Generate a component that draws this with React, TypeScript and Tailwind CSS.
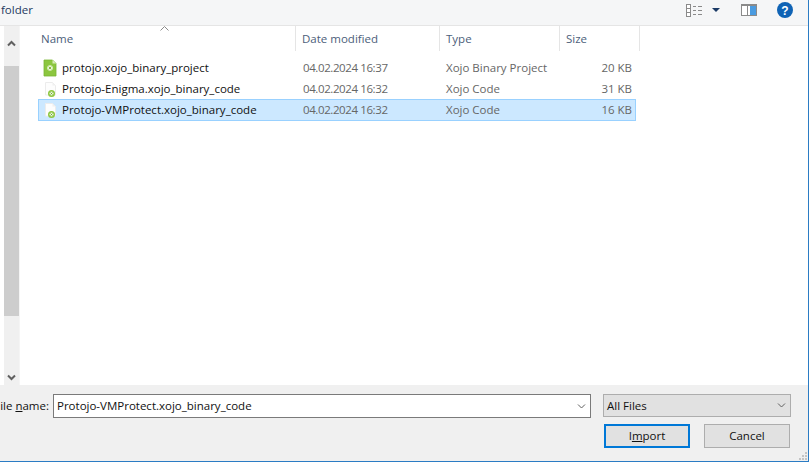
import React from "react";

const font = { fontFamily: '"Open Sans", "Noto Sans", sans-serif' };

function ProjectIcon() {
  return (
    <svg width="16" height="18" viewBox="0 0 16 18" className="shrink-0">
      <path d="M1 1h8.500l3.500 3.500V17H1z" fill="#8cc63f" stroke="#7ab534" strokeWidth="0.800" />
      <path d="M9.500 1v3.500H13z" fill="#d8ecb8" />
      <circle cx="7" cy="9" r="2.800" fill="#e8f5d5" />
      <path d="M5.700 7.700l2.600 2.600M8.300 7.700l-2.600 2.600" stroke="#78b030" strokeWidth="0.900" />
    </svg>
  );
}

function CodeIcon() {
  return (
    <svg width="16" height="18" viewBox="0 0 16 18" className="shrink-0">
      <path d="M2.500 2.500h7l3 3V15h-10z" fill="#fdfdfd" stroke="#ececec" strokeWidth="1" />
      <path d="M9.500 2.500v3h3z" fill="#f0f0f0" />
      <circle cx="8.500" cy="13.500" r="3.500" fill="#8cc63f" />
      <circle cx="8.500" cy="13.500" r="2" fill="#eaf5da" />
      <path d="M7.500 12.500l2 2M9.500 12.500l-2 2" stroke="#6ca52c" strokeWidth="0.900" />
    </svg>
  );
}

function Chevron({ up = false, color = "#606060", w = 2 }: { up?: boolean; color?: string; w?: number }) {
  return (
    <svg width="9" height="7" viewBox="0 0 9 7">
      <path d={up ? "M1 5.500l3.500-3.500 3.500 3.500" : "M1 1.500l3.500 3.500 3.500-3.500"} fill="none" stroke={color} strokeWidth={w} />
    </svg>
  );
}

const rows = [
  { n: "protojo.xojo_binary_project", d: "04.02.2024 16:37", t: "Xojo Binary Project", s: "20 KB", project: true },
  { n: "Protojo-Enigma.xojo_binary_code", d: "04.02.2024 16:32", t: "Xojo Code", s: "31 KB" },
  { n: "Protojo-VMProtect.xojo_binary_code", d: "04.02.2024 16:32", t: "Xojo Code", s: "16 KB", sel: true },
];

export default function App() {
  return (
    <div className="w-[809px] h-[462px] flex flex-col overflow-hidden bg-[#f0f0f0] text-[11.5px] border-r border-b border-[#2b7cc4]" style={font}>
      <div className="h-[26px] shrink-0 flex items-center bg-[#f5f6f7] border-b border-[#e5e5e5]">
        <span className="pl-[1px] -mt-[6px] text-[#1e3a5f]">folder</span>
        <div className="ml-auto flex items-center -mt-[5px]">
          <svg width="17" height="13" viewBox="0 0 17 13">
            <rect x="0.500" y="0.500" width="4" height="12" fill="#fff" stroke="#8a8a8a" />
            <path d="M0 4.500h5M0 8.500h5" stroke="#8a8a8a" />
            <path d="M7 2.500h3M12 2.500h4M7 6.500h3M12 6.500h4M7 10.500h3M12 10.500h4" stroke="#8a8a8a" />
          </svg>
          <svg width="8" height="4" viewBox="0 0 8 4" className="ml-[9px]">
            <path d="M0 0h8L4 4z" fill="#1b3a66" />
          </svg>
          <svg width="16" height="12" viewBox="0 0 16 12" className="ml-[21px]">
            <rect x="0.500" y="0.500" width="15" height="11" fill="#fff" stroke="#8a8a8a" />
            <rect x="9" y="2" width="6" height="9" fill="#4a9be0" />
            <rect x="1" y="1" width="14" height="1" fill="#8a8a8a" />
            <rect x="6" y="1" width="1" height="10" fill="#8a8a8a" />
          </svg>
          <svg width="16" height="16" viewBox="0 0 16 16" className="ml-[20px] mr-[15px]">
            <circle cx="8" cy="8" r="8" fill="#0f63b5" />
            <text x="8" y="12.500" textAnchor="middle" fontSize="12" fontWeight="700" fill="#fff" fontFamily="Liberation Sans">?</text>
          </svg>
        </div>
      </div>

      <div className="flex-1 min-h-0 flex bg-white">
        <div className="w-[4px] shrink-0" />
        <div className="w-[15px] shrink-0 flex flex-col bg-[#f0f0f0]">
          <div className="h-[40px] shrink-0 pt-[14px] flex justify-center"><Chevron up /></div>
          <div className="h-[250px] shrink-0 bg-[#cdcdcd]" />
          <div className="flex-1 flex items-end justify-center pb-[4px]"><Chevron /></div>
        </div>
        <div className="w-[1px] shrink-0 bg-[#f5f5f5]" />
        <div className="flex-1 min-w-0 pl-[18px] relative">
          <div className="flex h-[25px] text-[#4c607a]">
            <div className="w-[258px] flex items-center pl-[3px] border-r border-[#e5e5e5]">Name</div>
            <div className="w-[144px] flex items-center pl-[6px] border-r border-[#e5e5e5]">Date modified</div>
            <div className="w-[120px] flex items-center pl-[6px] border-r border-[#e5e5e5]">Type</div>
            <div className="w-[80px] flex items-center pl-[6px] border-r border-[#e5e5e5]">Size</div>
          </div>
          <svg width="9" height="5" viewBox="0 0 9 5" className="absolute left-[140px] top-0">
            <path d="M.5 4.500l4-4 4 4" fill="none" stroke="#8a8a8a" />
          </svg>
          <div className="mt-[6px] w-[598px]">
            {rows.map((r) => (
              <div key={r.n} className={`flex items-center h-[21px] border ${r.sel ? "bg-[#cce8ff] border-[#99d1ff] h-[22px]" : "border-transparent"}`}>
                <div className="w-[257px] flex items-center pl-[4px] gap-[3px] text-[#111]">
                  {r.project ? <ProjectIcon /> : <CodeIcon />}
                  <span className="whitespace-nowrap">{r.n}</span>
                </div>
                <div className="w-[144px] pl-[7px] text-[#666] tracking-[-0.4px]">{r.d}</div>
                <div className="w-[120px] pl-[6px] text-[#666]">{r.t}</div>
                <div className="flex-1 text-right pr-[3px] text-[#666]">{r.s}</div>
              </div>
            ))}
          </div>
        </div>
      </div>

      <div className="h-[76px] shrink-0 bg-[#f0f0f0] relative">
        <div className="flex items-start pt-[9px]">
          <div className="w-[53px] h-[24px] flex items-center justify-end pr-[4px] text-[#111] whitespace-nowrap overflow-hidden">
            <span>ile <u>n</u>ame:</span>
          </div>
          <div className="w-[538px] h-[24px] bg-white border border-[#7a7a7a] flex items-center pl-[3px] text-[#111]">
            <span className="flex-1">Protojo-VMProtect.xojo_binary_code</span>
            <span className="pr-[4px] flex"><Chevron color="#606060" w={1} /></span>
          </div>
          <div className="ml-[12px] w-[188px] h-[23px] bg-[#e1e1e1] border border-[#adadad] flex items-center pl-[3px] text-[#111]">
            <span className="flex-1">All Files</span>
            <span className="pr-[4px] flex"><Chevron color="#606060" w={1} /></span>
          </div>
        </div>
        <div className="flex justify-end pr-[18px] mt-[6px] gap-[14px]">
          <button className="w-[86px] h-[24px] bg-[#e1e1e1] border-2 border-[#0078d7] text-[#111] flex items-center justify-center"><span>I<u>m</u>port</span></button>
          <button className="w-[86px] h-[24px] bg-[#e1e1e1] border border-[#adadad] text-[#111] flex items-center justify-center">Cancel</button>
        </div>
        <svg width="8" height="8" viewBox="0 0 8 8" className="absolute right-[1px] bottom-[1px]">
          <path d="M6 0h2v2H6zM3 3h2v2H3zM6 3h2v2H6zM0 6h2v2H0zM3 6h2v2H3zM6 6h2v2H6z" fill="#c4c4c4" />
        </svg>
      </div>
    </div>
  );
}
